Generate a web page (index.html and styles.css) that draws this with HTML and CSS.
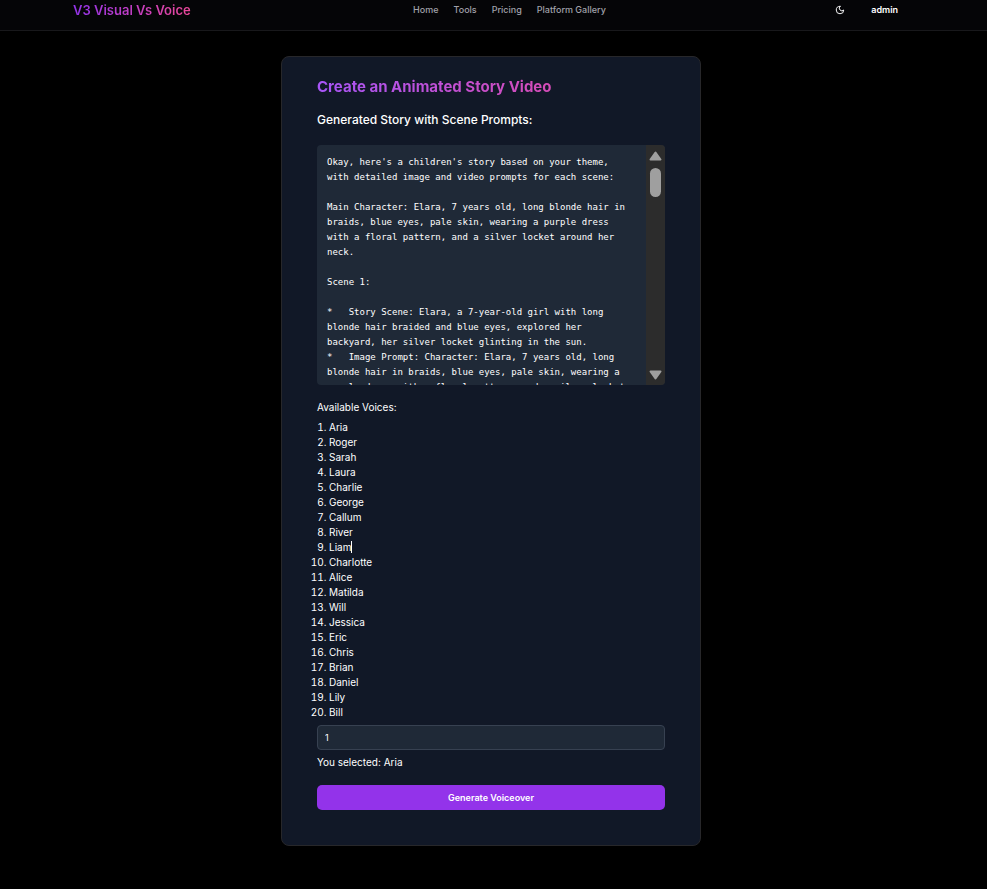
FILE: index.html
```html
<!DOCTYPE html>
<html lang="en">
<head>
  <meta charset="utf-8">
  <meta name="viewport" content="width=device-width, initial-scale=1">
  <title>V3 Visual Vs Voice</title>
  <link rel="stylesheet" href="styles.css">
</head>
<body>
  <header class="site-header">
    <a class="brand" href="#">V3 Visual Vs Voice</a>
    <nav class="site-nav">
      <a href="#">Home</a>
      <a href="#">Tools</a>
      <a href="#">Pricing</a>
      <a href="#">Platform Gallery</a>
    </nav>
    <div class="account">
      <button class="theme-toggle" type="button" aria-label="Toggle theme">
        <svg viewBox="0 0 24 24" width="10" height="10" fill="none" stroke="currentColor" stroke-width="2.4" stroke-linecap="round" stroke-linejoin="round"><path d="M12 3a6 6 0 0 0 9 9 9 9 0 1 1-9-9Z"/></svg>
      </button>
      <button class="user" type="button">admin</button>
    </div>
  </header>

  <main class="page">
    <section class="card">
      <h1 class="title">Create an Animated Story Video</h1>
      <h2 class="subtitle">Generated Story with Scene Prompts:</h2>
      <div class="story">
        <pre class="story-text">Okay, here's a children's story based on your theme, with detailed image and video prompts for each scene:

Main Character: Elara, 7 years old, long blonde hair in braids, blue eyes, pale skin, wearing a purple dress with a floral pattern, and a silver locket around her neck.

Scene 1:

*   Story Scene: Elara, a 7-year-old girl with long blonde hair braided and blue eyes, explored her backyard, her silver locket glinting in the sun.
*   Image Prompt: Character: Elara, 7 years old, long blonde hair in braids, blue eyes, pale skin, wearing a purple dress with a floral pattern, and a silver locket</pre>
        <div class="scrollbar" aria-hidden="true">
          <svg viewBox="0 0 13 10" width="13" height="10"><path d="M6.5 1.5 11.5 8.5H1.5Z" fill="currentColor" stroke="currentColor" stroke-width="2" stroke-linejoin="round"/></svg>
          <span class="thumb"></span>
          <svg class="down" viewBox="0 0 13 10" width="13" height="10"><path d="M6.5 8.5 1.5 1.5H11.5Z" fill="currentColor" stroke="currentColor" stroke-width="2" stroke-linejoin="round"/></svg>
        </div>
      </div>
      <label class="label" for="voice">Available Voices:</label>
      <ol class="voices">
        <li>Aria</li>
        <li>Roger</li>
        <li>Sarah</li>
        <li>Laura</li>
        <li>Charlie</li>
        <li>George</li>
        <li>Callum</li>
        <li>River</li>
        <li><span class="caret">Liam</span></li>
        <li>Charlotte</li>
        <li>Alice</li>
        <li>Matilda</li>
        <li>Will</li>
        <li>Jessica</li>
        <li>Eric</li>
        <li>Chris</li>
        <li>Brian</li>
        <li>Daniel</li>
        <li>Lily</li>
        <li>Bill</li>
      </ol>
      <input class="voice-input" id="voice" type="text" value="1">
      <p class="selected">You selected: Aria</p>
      <button class="generate" type="button">Generate Voiceover</button>
    </section>
  </main>
</body>
</html>
```
FILE: styles.css
```css
* {
  box-sizing: border-box;
  margin: 0;
  padding: 0;
}

body {
  background: #000;
  color: #fff;
  font: 10px/15px Inter, "Liberation Sans", sans-serif;
}

a {
  color: inherit;
  text-decoration: none;
}

button,
input {
  border: 0;
  background: none;
  color: inherit;
  font: inherit;
}

.site-header {
  display: flex;
  align-items: center;
  justify-content: space-between;
  padding: 0 73px 10px;
  background: #050507;
  border-bottom: 1px solid #18181b;
  line-height: 20px;
}

.brand,
.title {
  background: linear-gradient(to right, #9333ea, #ec4899);
  background-clip: text;
  -webkit-background-clip: text;
  color: transparent;
}

.brand {
  font-size: 13px;
  font-weight: 600;
}

.site-nav {
  display: flex;
  gap: 15px;
  color: #a1a1aa;
  font-size: 9px;
  font-weight: 500;
}

.account {
  display: flex;
  align-items: center;
}

.theme-toggle {
  display: flex;
  padding: 5px 7px;
  color: #f4f4f5;
}

.user {
  padding: 0 16px 0 19px;
  font-size: 9px;
  font-weight: 600;
}

.page {
  display: flex;
  justify-content: center;
  padding: 25px 5px 43px 0;
}

.card {
  width: 100%;
  max-width: 420px;
  padding: 20px 35px 35px;
  background: #111827;
  border: 1px solid #27272a;
  border-radius: 8px;
}

.title {
  margin-bottom: 13px;
  background-image: linear-gradient(to right, #a855f7, #ec4899);
  font-size: 15px;
  font-weight: 700;
  line-height: 20px;
}

.subtitle {
  margin-bottom: 15px;
  font-size: 12px;
  font-weight: 500;
  line-height: 20px;
}

.story {
  display: flex;
  height: 240px;
  margin-bottom: 15px;
  overflow: hidden;
  background: #1f2937;
  border-radius: 4px;
}

.story-text {
  flex: 1;
  min-width: 0;
  padding: 10px 15px 10px 10px;
  font: 9px/15px Consolas, "DejaVu Sans Mono", monospace;
  white-space: pre-wrap;
}

.scrollbar {
  display: flex;
  flex-direction: column;
  align-items: center;
  gap: 7px;
  width: 19px;
  padding: 6px 0 5px;
  background: #2c2c2c;
  color: #9f9f9f;
}

.thumb {
  width: 11px;
  height: 29px;
  border-radius: 6px;
  background: currentColor;
}

.down {
  margin-top: auto;
}

.label {
  display: block;
  margin-bottom: 5px;
}

.voices {
  margin-bottom: 5px;
  padding-left: 12px;
}

.caret {
  border-right: 1px solid #fff;
}

.voice-input {
  display: block;
  width: 100%;
  height: 25px;
  margin-bottom: 5px;
  padding: 0 7px;
  background: #1f2937;
  border: 1px solid #374151;
  border-radius: 4px;
  font-size: 9px;
}

.selected {
  margin-bottom: 15px;
}

.generate {
  display: block;
  width: 100%;
  height: 25px;
  background: #9333ea;
  border-radius: 5px;
  font-size: 9px;
  font-weight: 600;
}
```
